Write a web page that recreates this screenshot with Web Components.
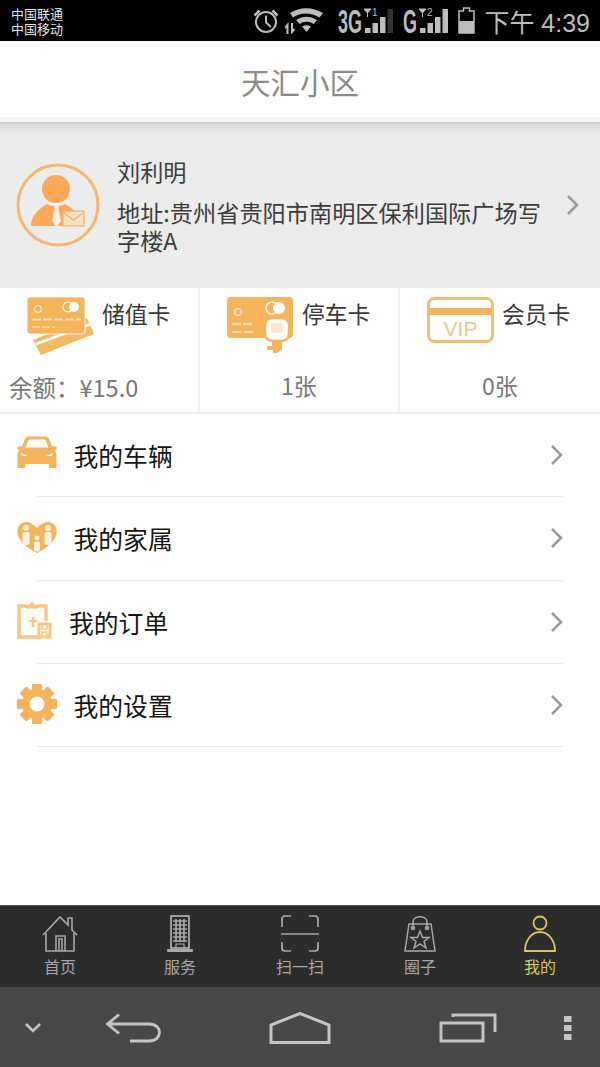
<!DOCTYPE html>
<html lang="zh">
<head>
<meta charset="utf-8">
<title>天汇小区</title>
<style>
  html, body { margin: 0; padding: 0; }
  body {
    width: 600px; height: 1067px; overflow: hidden; background: #fff;
    display: flex; flex-direction: column;
    font-family: "Noto Sans CJK SC", "Liberation Sans", sans-serif;
  }
  svg { display: block; }
  menu-list { flex: 1; }
  .tc { font-family: "Noto Sans CJK TC", sans-serif; }
</style>
</head>
<body>

<status-bar>
  <svg slot="icons" width="26" height="26" viewBox="0 0 26 26" fill="none" stroke="#bdbdbd">
    <circle cx="13" cy="14" r="10" stroke-width="2"/>
    <path d="M13 7.500V14.500L18 19" stroke-width="2"/>
    <path d="M1.500 7.500 6.500 2.500M24.500 7.500 19.500 2.500" stroke-width="2.600"/>
  </svg>
  <svg slot="icons" style="margin-left:6px" width="38" height="26" viewBox="0 0 38 26">
    <path d="M5 5C15-1.500 27-1.500 38 5L34.500 9.500C25 4 16 4 8 9.500Z" fill="#bdbdbd"/>
    <path d="M11 12C18 7.500 25 7.500 32 12L28.500 16C24 13 19 13 14.500 16Z" fill="#bdbdbd"/>
    <path d="M17 18.500C20 16.800 23 16.800 26 18.500L21.500 24Z" fill="#bdbdbd"/>
    <path d="M2.500 26V17L0 20M7 15V24L9.500 21" fill="none" stroke="#bdbdbd" stroke-width="2"/>
  </svg>
  <sim-signal slot="icons" style="margin-left:15px" net="3G" sim="1" bars="3"></sim-signal>
  <sim-signal slot="icons" style="margin-left:7px" net="G" sim="2" bars="4"></sim-signal>
  <svg slot="icons" style="margin-left:7px" width="17" height="27" viewBox="0 0 17 27">
    <path d="M1 4H5.500V1H11.500V4H16V26H1Z" fill="none" stroke="#bdbdbd" stroke-width="1.500"/>
    <rect x="1" y="14" width="15" height="12" fill="#bdbdbd"/>
  </svg>
</status-bar>

<title-bar>天汇小区</title-bar>

<profile-card>
  <svg slot="avatar" width="84" height="84" viewBox="0 0 84 84">
    <circle cx="42" cy="42" r="40" fill="none" stroke="#f6b66c" stroke-width="3"/>
    <circle cx="40" cy="26" r="14" fill="#f9a957"/>
    <path d="M15 63C15 54 21 47 31 41C36 44 44 44 49 41C55 44 59 48 61 52V63Z" fill="#f9a957"/>
    <path d="M38 41H43L42.500 46L45 58L40.500 65L36 58L38.500 46Z" fill="#f6efe4"/>
    <rect x="47" y="48" width="21" height="15" fill="#f6e2c6" stroke="#f5b56a" stroke-width="1.200"/>
    <path d="M47 49 57.500 57 68 49" fill="none" stroke="#f5b56a" stroke-width="1.400"/>
  </svg>
  <span slot="name">刘利明</span>
  <span slot="address">地址:贵州省贵阳市南明区保利国际广场写字楼A</span>
</profile-card>

<card-row>
  <card-tile>
    <svg slot="icon" width="67" height="60" viewBox="0 0 67 60">
      <path d="M6 43 60 21 67 37 14 58Z" fill="#f3b862"/>
      <path d="M9 47 64 27" stroke="#fff" stroke-width="2.500"/>
      <rect x="0" y="0" width="58" height="37" rx="3" fill="#f3b45c" stroke="#fff" stroke-width=".8"/>
      <circle cx="11" cy="12" r="3.500" fill="none" stroke="#fbe6c4" stroke-width="1.500"/>
      <circle cx="41" cy="10" r="5" fill="none" stroke="#fff" stroke-width="1.200"/>
      <circle cx="47" cy="10" r="5" fill="#fff"/>
      <path d="M5 22.500H54" stroke="#fbdcae" stroke-width="2" stroke-dasharray="9 2"/>
      <path d="M5 30H28" stroke="#fbdcae" stroke-width="1.500" stroke-dasharray="8 2"/>
    </svg>
    储值卡
    <span slot="value" style="font-size:23.500px">余额<span class="tc">：</span>¥15.0</span>
  </card-tile>
  <card-tile>
    <svg slot="icon" width="67" height="60" viewBox="0 0 67 60">
      <rect x="0" y="0" width="66" height="41" rx="4" fill="#f3b45c"/>
      <circle cx="11" cy="15" r="3.500" fill="none" stroke="#fbe6c4" stroke-width="1.500"/>
      <circle cx="45" cy="11" r="6" fill="none" stroke="#fff" stroke-width="1.200"/>
      <circle cx="52" cy="11" r="6" fill="#fff"/>
      <path d="M5 27H26" stroke="#fbdcae" stroke-width="2.500" stroke-dasharray="9 2"/>
      <path d="M5 35H27" stroke="#fbdcae" stroke-width="2" stroke-dasharray="9 3"/>
      <rect x="38" y="21" width="24" height="23" rx="7" fill="#fff" stroke="#f3b45c" stroke-width="2.500"/>
      <rect x="44" y="26" width="12" height="10" rx="2" fill="#fde9c9"/>
      <path d="M45 45H55V52L50 56H46V53H40V49H45Z" fill="#f3b45c"/>
    </svg>
    停车卡
    <span slot="value" class="center">1张</span>
  </card-tile>
  <card-tile last>
    <svg slot="icon" width="67" height="60" viewBox="0 0 67 60">
      <rect x="1.500" y="1.500" width="64" height="43" rx="6" fill="none" stroke="#f0c070" stroke-width="3"/>
      <rect x="2" y="11" width="63" height="7" fill="#f3b45c"/>
      <text x="33.500" y="39" text-anchor="middle" font-family="Liberation Sans, sans-serif" font-size="21" fill="#edc68d">VIP</text>
    </svg>
    会员卡
    <span slot="value" class="center">0张</span>
  </card-tile>
</card-row>

<menu-list>
  <menu-row>
    <svg slot="icon" style="margin-top:-6px" width="40" height="32" viewBox="0 0 40 32">
      <path d="M0 12C0 10.500 3 10 5 10.500L8 3C9 1 10 .5 13 .5H27C30 .5 31 1 32 3L35 10.500C37 10 40 10.500 40 12C40 13.500 38 14 37.500 14C39 16 39.500 18 39.500 20V32H32V28H8V32H.5V20C.5 18 1 16 2.500 14C2 14 0 13.500 0 12Z" fill="#f3b45c"/>
      <path d="M8.500 11.500 11 5C11.500 4 12 3.500 13.500 3.500H26.500C28 3.500 28.500 4 29 5L31.500 11.500Z" fill="#fff"/>
      <path d="M4 17 11 20H5ZM36 17 29 20H35Z" fill="#fff"/>
    </svg>
    我的车辆
  </menu-row>
  <menu-row>
    <svg slot="icon" style="margin-top:-2px" width="40" height="32" viewBox="0 0 40 32">
      <path d="M20 7C15 1 9 0 5 2C0 5-1 11 2 17C6 24 14 29 20 32C26 29 34 24 38 17C41 11 40 5 35 2C31 0 25 1 20 7Z" fill="#f3b45c"/>
      <g fill="#fdf3e2">
        <circle cx="9" cy="7" r="3"/><rect x="5.500" y="11" width="7" height="13" rx="2"/>
        <circle cx="31" cy="7" r="3"/><rect x="27.500" y="11" width="7" height="13" rx="2"/>
        <circle cx="20" cy="17" r="2.400"/><rect x="17" y="20.500" width="6" height="10" rx="2"/>
      </g>
    </svg>
    我的家属
  </menu-row>
  <menu-row style="--gap:12px">
    <svg slot="icon" style="margin-top:-4px" width="35" height="38" viewBox="0 0 35 38" fill="none" stroke="#f6c684" stroke-width="3.500">
      <path d="M23 36H2V5H9M21 5H29V20"/>
      <path d="M9 7V4H13C13 .5 17 .5 17 4H21V7Z" fill="#f6c684" stroke-width="1"/>
      <path d="M12 20H20M16 16V26" stroke-width="2.500"/>
      <path d="M22 23H33V36H22Z" stroke-width="3"/>
      <path d="M25 24V28H30V24M25 36V31H30V36" stroke-width="1.500"/>
    </svg>
    我的订单
  </menu-row>
  <menu-row>
    <svg slot="icon" style="margin-top:-2px" width="40" height="40" viewBox="0 0 40 40" fill="#f3b45c">
      <rect x="15" y="0" width="10" height="40" rx="1"/>
      <rect x="15" y="0" width="10" height="40" rx="1" transform="rotate(45 20 20)"/>
      <rect x="15" y="0" width="10" height="40" rx="1" transform="rotate(90 20 20)"/>
      <rect x="15" y="0" width="10" height="40" rx="1" transform="rotate(135 20 20)"/>
      <circle cx="20" cy="20" r="15"/>
      <circle cx="20" cy="20" r="7.500" fill="#fff"/>
    </svg>
    我的设置
  </menu-row>
</menu-list>

<tab-bar>
  <tab-item label="首页">
    <svg width="36" height="38" viewBox="0 0 36 38" fill="none" stroke="#a8a8a8" stroke-width="1.600">
      <path d="M1 20 18 2 26 10V3H30V15L35 20"/>
      <path d="M4 18V36H32V18"/>
      <path d="M14 36V21H23V36M17 36V24H20V36"/>
    </svg>
  </tab-item>
  <tab-item label="服务">
    <svg width="28" height="38" viewBox="0 0 28 38" fill="none" stroke="#a8a8a8">
      <rect x="5" y="1" width="18" height="32" stroke-width="1.800"/>
      <path d="M7 6H21M7 10H21M7 14H21M7 18H21M7 22H21M7 26H21M10 4V27M14 4V27M18 4V27" stroke-width="1.700"/>
      <path d="M10 33V29H18V33" stroke-width="1.200"/>
      <rect x="1" y="34" width="26" height="3" rx="1" fill="#a8a8a8" stroke="none"/>
    </svg>
  </tab-item>
  <tab-item label="扫一扫">
    <svg width="40" height="38" viewBox="0 0 40 38" fill="none" stroke="#a8a8a8" stroke-width="1.700">
      <path d="M2 12V4Q2 1 5 1H11M29 1H35Q38 1 38 4V12"/>
      <path d="M1 19H39"/>
      <path d="M2 27V33Q2 36 5 36H11M29 36H35Q38 36 38 33V27"/>
    </svg>
  </tab-item>
  <tab-item label="圈子">
    <svg width="32" height="38" viewBox="0 0 32 38" fill="none" stroke="#a8a8a8" stroke-width="1.500">
      <path d="M5 9H27L31 36H1Z"/>
      <path d="M9 14V7C9 0 23 0 23 7V14"/>
      <circle cx="9" cy="13" r="1.500"/><circle cx="23" cy="13" r="1.500"/>
      <path d="M16 16 18.500 22.500H25L20 26.500 22 33 16 29 10 33 12 26.500 7 22.500H13.500Z"/>
    </svg>
  </tab-item>
  <tab-item label="我的" active>
    <svg width="32" height="38" viewBox="0 0 32 38" fill="none" stroke="#d9c468" stroke-width="1.800">
      <circle cx="16" cy="8" r="6.500"/>
      <path d="M1 36C1 26 7 17 16 17C25 17 31 26 31 36Z"/>
    </svg>
  </tab-item>
</tab-bar>

<nav-bar>
  <svg width="18" height="12" viewBox="0 0 18 12" fill="none" stroke="#c4c4c4" stroke-width="2.600"><path d="M2 2 9 9 16 2"/></svg>
  <svg width="56" height="30" viewBox="0 0 56 30" fill="none" stroke="#c4c4c4" stroke-width="2.800"><path d="M14 1.500 2.500 11 14 20.500M3 11H44C58 11 58 28 44 28H25"/></svg>
  <svg width="62" height="32" viewBox="0 0 62 32" fill="none" stroke="#c4c4c4" stroke-width="3"><path d="M2 30.500V13L31 1.500 60 13V30.500Z"/></svg>
  <svg width="58" height="30" viewBox="0 0 58 30" fill="none" stroke="#c4c4c4" stroke-width="3"><path d="M2 10H44V28H2Z"/><path d="M14 4V2H56V19"/></svg>
  <svg width="8" height="24" viewBox="0 0 8 24" fill="#c4c4c4"><rect width="7.500" height="6"/><rect y="9" width="7.500" height="6"/><rect y="18" width="7.500" height="6"/></svg>
</nav-bar>

<script>
// Status bar with carrier names on the left, icons and clock on the right
class StatusBar extends HTMLElement {
  constructor() {
    super();
    this.attachShadow({ mode: "open" }).innerHTML = `
      <style>
        :host { display: flex; align-items: center; height: 41px; background: #000; padding: 0 10px 0 11px; flex: none; }
        .carrier { font-size: 13px; color: #e6e6e6; margin-top: 2px; font-family: "Liberation Sans", "Noto Sans CJK SC", sans-serif; }
        .carrier div { height: 15px; line-height: 15px; }
        .icons { display: flex; align-items: center; margin-left: auto; }
        .time { font-size: 25px; color: #bdbdbd; margin-left: 9px; font-family: "Liberation Sans", "Noto Sans CJK SC", sans-serif; white-space: nowrap; }
      </style>
      <div class="carrier"><div>中国联通</div><div>中国移动</div></div>
      <div class="icons"><slot name="icons"></slot></div>
      <div class="time">下午 4:39</div>`;
  }
}
customElements.define("status-bar", StatusBar);

// One SIM indicator: network letters, antenna label and signal bars
class SimSignal extends HTMLElement {
  constructor() {
    super();
    const root = this.attachShadow({ mode: "open" });
    const net = this.getAttribute("net");
    const sim = this.getAttribute("sim");
    const bars = Number(this.getAttribute("bars"));
    const w = net.length > 1 ? 24 : 14;
    let rects = "";
    [5, 10, 16, 24].forEach((h, i) => {
      const on = i < bars;
      rects += `<rect x="${w + 3 + i * 7.500}" y="${25 - h}" width="5.500" height="${h}" fill="${on ? "#bdbdbd" : "#333"}"/>`;
    });
    // letters are squeezed horizontally with a scale, the reference font is condensed
    root.innerHTML = `
      <style>
        :host { display: block; height: 26px; }
        svg { display: block; margin-top: -8px; }
      </style>
      <svg width="${w + 34}" height="42" viewBox="0 -8 ${w + 34} 42">
        <text transform="translate(0 25) scale(.545 1)" font-family="Liberation Sans, sans-serif" font-weight="700" font-size="33" fill="#bdbdbd">${net}</text>
        <text x="${w + 10}" y="8" font-family="Liberation Sans, sans-serif" font-size="10" fill="#bdbdbd">${sim}</text>
        <path d="M${w + 2} 1H${w + 9}L${w + 5.500} 5ZM${w + 5.500} 4V9" fill="#bdbdbd" stroke="#bdbdbd"/>
        ${rects}
      </svg>`;
  }
}
customElements.define("sim-signal", SimSignal);

// White title bar
class TitleBar extends HTMLElement {
  constructor() {
    super();
    this.attachShadow({ mode: "open" }).innerHTML = `
      <style>
        :host { display: flex; align-items: center; justify-content: center; height: 80px; padding-bottom: 1px; flex: none;
          background: #fff; color: #8a8a8a; font-size: 29.500px; box-shadow: inset 0 -5px 0 #f6f6f6; }
      </style>
      <slot></slot>`;
  }
}
customElements.define("title-bar", TitleBar);

// Gray block with avatar, name and address
class ProfileCard extends HTMLElement {
  constructor() {
    super();
    this.attachShadow({ mode: "open" }).innerHTML = `
      <style>
        :host { display: flex; align-items: center; height: 166px; flex: none; box-sizing: border-box; padding: 0 20px 0 16px;
          background: linear-gradient(#cfcfcf, #e4e4e4 6px, #ececec 14px); color: #3d3d3d; font-size: 23.200px; }
        .info { flex: 1; margin-left: 17px; margin-top: -3px; }
        .name { line-height: 34px; }
        .address { line-height: 28px; margin-top: 10px; width: 431px; }
        svg { margin-left: 16px; flex: none; }
      </style>
      <slot name="avatar"></slot>
      <div class="info">
        <div class="name"><slot name="name"></slot></div>
        <div class="address"><slot name="address"></slot></div>
      </div>
      <svg width="14" height="22" viewBox="0 0 14 22" fill="none" stroke="#9a9a9a" stroke-width="2.500"><path d="M2 2 11 11 2 20"/></svg>`;
  }
}
customElements.define("profile-card", ProfileCard);

// Row of three card tiles
class CardRow extends HTMLElement {
  constructor() {
    super();
    this.attachShadow({ mode: "open" }).innerHTML = `
      <style>
        :host { display: grid; grid-template-columns: repeat(3, 200px); height: 124px; flex: none; background: #fff;
          border-bottom: 2px solid #eeeeee; }
      </style>
      <slot></slot>`;
  }
}
customElements.define("card-row", CardRow);

// One tile: icon and name on top, balance below
class CardTile extends HTMLElement {
  constructor() {
    super();
    this.attachShadow({ mode: "open" }).innerHTML = `
      <style>
        :host { display: flex; flex-direction: column; height: 124px; box-sizing: border-box; padding-top: 9px;
          border-right: 2px solid #f0f0f0; color: #3a3a3a; font-size: 22.800px; }
        :host([last]) { border-right: 0; }
        .top { display: flex; padding-left: 27px; height: 60px; }
        .label { margin-left: 8px; line-height: 33px; white-space: nowrap; }
        .value { margin-top: auto; padding: 0 0 8px 9px; line-height: 34px; font-size: 23px; color: #777; }
        ::slotted(.center) { display: block; text-align: center; margin: 0 0 2px -9px; }
      </style>
      <div class="top"><slot name="icon"></slot><div class="label"><slot></slot></div></div>
      <div class="value"><slot name="value"></slot></div>`;
  }
}
customElements.define("card-tile", CardTile);

// Menu rows stacked with equal height
class MenuList extends HTMLElement {
  constructor() {
    super();
    this.attachShadow({ mode: "open" }).innerHTML = `
      <style>
        :host { display: block; background: #fff; }
      </style>
      <slot></slot>`;
  }
}
customElements.define("menu-list", MenuList);

// Row with icon, text, chevron and a thin line below
class MenuRow extends HTMLElement {
  constructor() {
    super();
    this.attachShadow({ mode: "open" }).innerHTML = `
      <style>
        :host { display: block; color: #161616; font-size: 24.800px; }
        .row { display: flex; align-items: center; height: 82.300px; padding: 0 36px 0 17px; }
        .icon { width: 40px; display: flex; flex: none; }
        .text { margin-left: var(--gap, 16.500px); flex: 1; }
        .line { height: 1px; margin: 0 37px; background: #e8e8e8; }
      </style>
      <div class="row">
        <div class="icon"><slot name="icon"></slot></div>
        <div class="text"><slot></slot></div>
        <svg width="14" height="22" viewBox="0 0 14 22" fill="none" stroke="#9a9a9a" stroke-width="2.500"><path d="M2 2 11 11 2 20"/></svg>
      </div>
      <div class="line"></div>`;
  }
}
customElements.define("menu-row", MenuRow);

// Dark tab bar at the bottom
class TabBar extends HTMLElement {
  constructor() {
    super();
    this.attachShadow({ mode: "open" }).innerHTML = `
      <style>
        :host { display: grid; grid-template-columns: repeat(5, 120px); height: 81px; flex: none; background: #2c2c2c; border-top: 1px solid #555; }
      </style>
      <slot></slot>`;
  }
}
customElements.define("tab-bar", TabBar);

class TabItem extends HTMLElement {
  constructor() {
    super();
    this.attachShadow({ mode: "open" }).innerHTML = `
      <style>
        :host { display: flex; flex-direction: column; align-items: center; padding-top: 9px; color: #a8a8a8; font-size: 16px; }
        :host([active]) { color: #d9c468; }
        .icon { height: 38px; display: flex; }
        .label { line-height: 22px; margin-top: 2px; }
      </style>
      <div class="icon"><slot></slot></div>
      <div class="label">${this.getAttribute("label")}</div>`;
  }
}
customElements.define("tab-item", TabItem);

// Android navigation bar
class NavBar extends HTMLElement {
  constructor() {
    super();
    this.attachShadow({ mode: "open" }).innerHTML = `
      <style>
        :host { display: grid; grid-template-columns: 66px 134px 200px 136px 64px; justify-items: center; align-items: center;
          height: 80px; flex: none; background: #484848; padding-top: 2px; box-sizing: border-box; }
      </style>
      <slot></slot>`;
  }
}
customElements.define("nav-bar", NavBar);
</script>
</body>
</html>
